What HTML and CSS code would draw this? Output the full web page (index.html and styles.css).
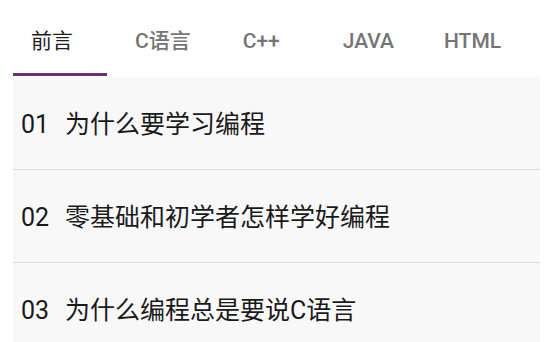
FILE: index.html
```html
<!DOCTYPE html>
<html lang="zh">
<head>
<meta charset="utf-8">
<link rel="stylesheet" href="styles.css">
</head>
<body>
<div class="app">
  <nav class="tabs">
    <span class="tab tab-1 active">前言</span>
    <span class="tab tab-2">C语言</span>
    <span class="tab tab-3">C++</span>
    <span class="tab tab-4">JAVA</span>
    <span class="tab tab-5">HTML</span>
  </nav>
  <div class="panel">
    <div class="row"><p class="line"><span class="num">01</span><span class="title">为什么要学习编程</span></p></div>
    <div class="row"><p class="line"><span class="num">02</span><span class="title">零基础和初学者怎样学好编程</span></p></div>
    <div class="row"><p class="line"><span class="num">03</span><span class="title">为什么编程总是要说C语言</span></p></div>
  </div>
</div>
</body>
</html>
```

FILE: styles.css
```css
html, body {
  margin: 0;
  padding: 0;
  background: #ffffff;
  overflow: hidden;
}
.app {
  width: 546px;
  height: 342px;
  font-family: Roboto, "Noto Sans CJK SC", sans-serif;
}
.tabs {
  display: flex;
  height: 77px;
  padding-left: 13px;
  box-sizing: border-box;
}
.tab {
  font-size: 21px;
  font-weight: 500;
  color: #757575;
  height: 76px;
  line-height: 82px;
  box-sizing: border-box;
  white-space: nowrap;
}
.tab.active {
  color: #1e1e1e;
  font-weight: 400;
  border-bottom: 3px solid #6e2d7f;
}
.tab-1 { width: 94px; padding-left: 18px; }
.tab-2 { margin-left: 28px; }
.tab-3 { margin-left: 52px; }
.tab-4 { margin-left: 63px; }
.tab-5 { margin-left: 50px; }
.panel {
  margin-left: 13px;
  width: 527px;
  background: #f8f8f8;
}
.row {
  display: flex;
  align-items: center;
  height: 93px;
  padding-left: 8px;
  padding-top: 4px;
  box-sizing: border-box;
  border-bottom: 1px solid #dcdcdc;
}
.line {
  margin: 0;
  font-size: 25px;
  line-height: 30px;
  color: #1a1a1a;
}
.num {
  display: inline-block;
  width: 44px;
}
```
